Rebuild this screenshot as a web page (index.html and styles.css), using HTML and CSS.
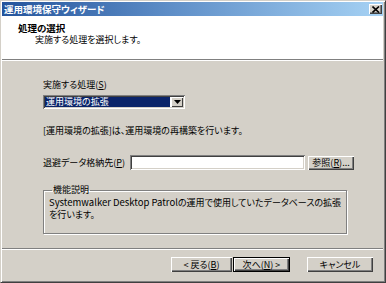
FILE: index.html
```html
<!DOCTYPE html>
<html lang="ja">
<head>
    <meta charset="UTF-8">
    <title>運用環境保守ウィザード</title>
    <link rel="stylesheet" href="styles.css">
</head>
<body>

    <div class="window">
        <!-- Title bar -->
        <div class="titlebar">
            <span class="title">運用環境保守ウィザード</span>
            <span class="close-btn">
                <svg width="8" height="7" viewBox="0 0 8 7"><path d="M0.5 0.5 L7 6.5 M7 0.5 L0.5 6.5" stroke="#000" stroke-width="1.6"/></svg>
            </span>
        </div>

        <!-- White header -->
        <div class="header">
            <div class="head-title">処理の選択</div>
            <div class="head-sub">実施する処理を選択します。</div>
        </div>

        <div class="content">
            <div class="field-label">実施する処理(<u>S</u>)</div>
            <div class="combo">
                <span class="combo-value">運用環境の拡張</span>
                <span class="combo-btn">
                    <svg width="7" height="4" viewBox="0 0 7 4"><path d="M0 0 H7 L3.5 4 Z" fill="#000"/></svg>
                </span>
            </div>

            <div class="desc">[運用環境の拡張]は、運用環境の再構築を行います。</div>

            <div class="path-row">
                <span class="path-label">退避データ格納先(<u>P</u>)</span>
                <div class="textbox"></div>
                <button class="btn btn-browse">参照(<u>R</u>)...</button>
            </div>

            <fieldset class="group">
                <legend>機能説明</legend>
                <div class="group-text"><span class="latin">Systemwalker Desktop Patrol</span>の運用で使用していたデータベースの拡張<br>を行います。</div>
            </fieldset>
        </div>

        <!-- Wizard buttons -->
        <div class="footer">
            <button class="btn btn-back">&lt; 戻る(<u>B</u>)</button>
            <button class="btn btn-next">次へ(<u>N</u>) &gt;</button>
            <button class="btn btn-cancel">キャンセル</button>
        </div>
    </div>

</body>
</html>
```

FILE: styles.css
```css
body {
    margin: 0;
    font-family: "Liberation Sans Narrow", "Noto Sans CJK JP", sans-serif;
    font-size: 9px;
    line-height: 12px;
    color: #000;
    font-feature-settings: "palt";
}

.window {
    width: 386px;
    height: 283px;
    box-sizing: border-box;
    display: flex;
    flex-direction: column;
    background-color: #d4d0c8;
    border: 1px solid;
    border-color: #d4d0c8 #404040 #404040 #d4d0c8;
    padding: 1px 2px 2px 1px;
    box-shadow: inset 1px 1px #fff, inset -1px -1px #808080;
}

/* Title bar */
.titlebar {
    height: 14px;
    display: flex;
    align-items: center;
    justify-content: space-between;
    padding: 0 1px 0 2px;
    background: linear-gradient(to right, #24549c, #5f8fc8 45%, #a6d2f4);
}

.title {
    color: #fff;
    font-weight: bold;
    font-size: 9.5px;
}

.close-btn {
    width: 13px;
    height: 10px;
    display: flex;
    align-items: center;
    justify-content: center;
    background-color: #d4d0c8;
    box-shadow: inset 1px 1px #fff, inset -1px -1px #404040, inset -2px -2px #808080;
}

/* Header */
.header {
    height: 44px;
    box-sizing: border-box;
    padding: 6px 0 0 16px;
    background-color: #fff;
    border-bottom: 1px solid #808080;
    box-shadow: 0 1px #fff;
    margin-bottom: 1px;
}

.head-title {
    font-weight: bold;
    font-size: 9.5px;
}

.head-sub {
    padding-left: 17px;
}

/* Main area */
.content {
    flex: 1;
    padding: 18px 0 0 41px;
    border-bottom: 1px solid #808080;
    box-shadow: 0 1px #fff;
    margin-bottom: 1px;
}

.combo {
    width: 142px;
    height: 14px;
    box-sizing: border-box;
    margin-top: 4px;
    display: flex;
    padding: 2px;
    background-color: #fff;
    box-shadow: inset 1px 1px #808080, inset -1px -1px #fff, inset 2px 2px #404040, inset -2px -2px #d4d0c8;
}

.combo-value {
    flex: 1;
    background-color: #0a246a;
    color: #fff;
    line-height: 10px;
    padding-left: 1px;
    margin-right: 1px;
}

.combo-btn {
    width: 12px;
    display: flex;
    align-items: center;
    justify-content: center;
    background-color: #d4d0c8;
    box-shadow: inset 1px 1px #fff, inset -1px -1px #404040;
}

.desc {
    margin-top: 16px;
}

.path-row {
    margin-top: 18px;
    display: flex;
    align-items: center;
}

.path-label {
    width: 87px;
}

.textbox {
    width: 175px;
    height: 15px;
    box-sizing: border-box;
    background-color: #fff;
    box-shadow: inset 1px 1px #808080, inset -1px -1px #fff, inset 2px 2px #404040, inset -2px -2px #d4d0c8;
}

.btn {
    font: inherit;
    font-feature-settings: "palt";
    height: 15px;
    padding: 0;
    border: none;
    color: #000;
    background-color: #d4d0c8;
    box-shadow: inset 1px 1px #fff, inset -1px -1px #404040, inset -2px -2px #808080;
}

.btn-browse {
    width: 46px;
    margin-left: 3px;
    height: 14px;
}

/* Group box */
.group {
    width: 280px;
    height: 50px;
    box-sizing: border-box;
    margin: 14px 0 0 0;
    padding: 1px 5px 0 5px;
    border: 1px solid #808080;
    box-shadow: inset 1px 1px #fff, 1px 1px #fff;
}

.group legend {
    padding: 0 1px;
    margin-left: 3px;
}

.group-text {
    line-height: 11.5px;
    white-space: nowrap;
}

.latin {
    font-size: 9.5px;
}

/* Footer */
.footer {
    height: 30px;
    box-sizing: border-box;
    display: flex;
    justify-content: flex-end;
    padding: 7px 10px 0 0;
}

.btn-back {
    width: 61px;
}

.btn-next {
    width: 57px;
    margin-left: 1px;
    box-shadow: inset 1px 1px #000, inset -1px -1px #000, inset 2px 2px #fff, inset -2px -2px #404040, inset -3px -3px #808080;
}

.btn-cancel {
    width: 66px;
    margin-left: 17px;
}
```
